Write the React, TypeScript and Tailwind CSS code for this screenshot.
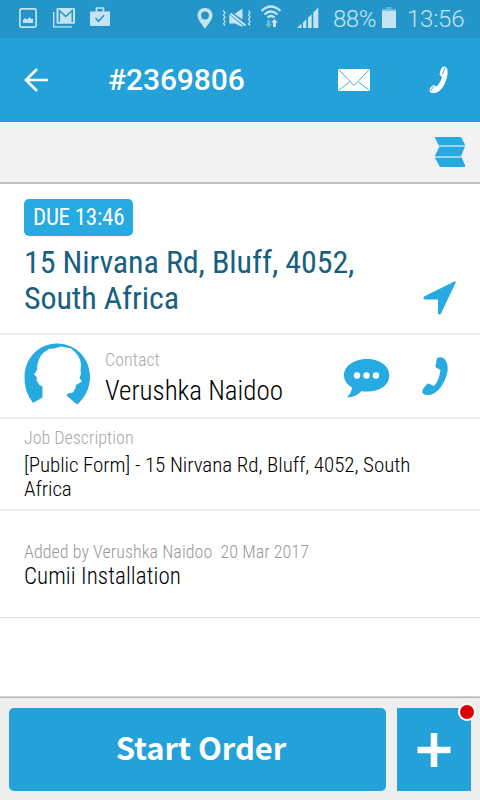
import type { ReactNode } from 'react';

const ROBOTO = "font-['Roboto','Liberation_Sans',sans-serif]";
const CONDENSED = "font-['Roboto','Liberation_Sans',sans-serif] [font-stretch:75%] whitespace-nowrap";

function StatusBar() {
  return (
    <div className="flex h-[38px] shrink-0 items-start bg-[#2495c8] text-[#c5e4f2]">
      <svg className="ml-[19px] mt-[8px] shrink-0" width="18" height="20" viewBox="0 0 18 20">
        <rect x="0.9" y="0.9" width="16.2" height="18.2" rx="1.5" fill="none" stroke="currentColor" strokeWidth="1.7" />
        <path d="M4 15v-3l2.200-2 2 1.800 2.200-2.800 1.600 2 1.500-.5.500 1V15z" fill="currentColor" />
      </svg>
      <svg className="ml-[16px] mt-[8px] shrink-0" width="22" height="20" viewBox="0 0 22 20">
        <path d="M0.7 4v14.900H19" fill="none" stroke="currentColor" strokeWidth="1.4" />
        <rect x="3.500" y="0" width="18.500" height="15.800" rx="1" fill="currentColor" />
        <path d="M6.300 14V2.500L12.800 8.500 19.300 2.500V14" fill="none" stroke="#2495c8" strokeWidth="1.500" />
      </svg>
      <svg className="ml-[15px] mt-[7px] shrink-0" width="20" height="20" viewBox="0 0 20 20">
        <path d="M6.500 5V1.500Q6.500 1 7 1h6q.5 0 .5.500V5" fill="none" stroke="currentColor" strokeWidth="1.700" />
        <path d="M0 4.500h20V17.500q0 1.500-1.500 1.500h-17Q0 19 0 17.500z" fill="currentColor" />
        <path d="M5.500 11l3 3.200 5.500-6" fill="none" stroke="#2495c8" strokeWidth="1.600" />
      </svg>
      <svg className="ml-[87px] mt-[8px] shrink-0" width="16" height="21" viewBox="0 0 16 21">
        <path fillRule="evenodd" d="M8 0C3.500 0 .5 3.300.5 7.300.5 12 5 16 8 20.800 11 16 15.500 12 15.500 7.300 15.500 3.300 12.500 0 8 0zm0 3.600a3.900 3.900 0 1 1 0 7.800 3.900 3.900 0 0 1 0-7.800z" fill="currentColor" />
      </svg>
      <svg className="ml-[9px] mt-[8px] shrink-0" width="29" height="21" viewBox="0 0 29 21">
        <path d="M1 2.500l2 2.200-1.500 2.200 1.500 2.200-1.500 2.200 1.500 2.200-1.500 2.200 1.500 1.800M26.500 2.500l1.500 2.200-1.500 2.200 1.500 2.200-1.500 2.200 1.500 2.200-1.500 2.200 1.500 1.800" fill="none" stroke="currentColor" strokeWidth="1.200" />
        <path d="M12.500 6L20.500.5V11.500z" fill="currentColor" />
        <path d="M7.300 6.500L20.500 17.500v1.500L13 15.500H7.300z" fill="currentColor" />
        <path d="M8.500 5.500L23.500 17.500" stroke="currentColor" strokeWidth="2.200" />
      </svg>
      <svg className="ml-[9px] mt-[5px] shrink-0" width="22" height="23" viewBox="0 0 22 23">
        <path d="M1.500 6Q11-3 20.500 6M4.500 9.500Q11 3.500 17.500 9.500M7.500 12.500Q11 9.500 14.500 12.500" fill="none" stroke="currentColor" strokeWidth="2.300" />
        <path d="M7 15h3v4h2l-3.500 4L5 19h2z" fill="currentColor" opacity="0.45" />
        <path d="M13 22V17.500h-2L14.500 14l3.300 3.500H16V22z" fill="currentColor" />
      </svg>
      <svg className="ml-[15px] mt-[7px] shrink-0" width="22" height="21" viewBox="0 0 22 21">
        <path d="M0 21l4.500-4.200V21zM6 15.400l3.300-3.100V21H6zM11 10.700l3.700-3.500V21H11zM16.300 5.500L21.300.5V21h-5z" fill="currentColor" />
      </svg>
      <div className={`${ROBOTO} ml-[14px] mt-[5px] w-[43px] whitespace-nowrap text-[24px] font-light leading-[28px] tracking-[-0.5px]`}>88%</div>
      <svg className="ml-[6px] mt-[7px] shrink-0" width="14" height="21" viewBox="0 0 14 21">
        <path d="M4.500 0h5v2H14v2H0V2h4.500z" fill="currentColor" opacity="0.45" />
        <path d="M0 3.800h14V21H0z" fill="currentColor" />
      </svg>
      <div className={`${ROBOTO} ml-[11px] mt-[5px] whitespace-nowrap text-[24px] font-light leading-[28px] tracking-[-0.2px]`}>13:56</div>
    </div>
  );
}

function Header() {
  return (
    <header className="flex h-[84px] shrink-0 items-center bg-[#25a1d9] text-white">
      <svg className="ml-[24px] shrink-0" width="24" height="24" viewBox="0 0 24 24">
        <path d="M13 1L2 12l11 11M2 12h22" fill="none" stroke="currentColor" strokeWidth="2.700" />
      </svg>
      <h1 className={`${ROBOTO} ml-[60px] w-[229px] text-[30px] font-medium leading-[36px] tracking-[-0.1px]`}>#2369806</h1>
      <svg className="ml-[1px] shrink-0" width="32" height="22" viewBox="0 0 32 22">
        <rect width="32" height="22" rx="0.500" fill="currentColor" />
        <path d="M0.500 0.500L16 16.500 31.500.500M0.500 21.500L11.500 13M31.500 21.500L20.500 13" fill="none" stroke="#25a1d9" strokeWidth="0.900" />
      </svg>
      <svg className="ml-[59px] shrink-0" width="20" height="28" viewBox="0 0 20 28">
        <path d="M13.500.8Q16-.2 18 2.500 19.500 6 17.500 13 14 24 7.500 26.500 3 28 .5 25.500L1 22 4.500 18.500 7.500 20.500Q11 17.500 13 11L10.500 8.500 11.500 4z" fill="currentColor" />
        <path d="M15.700 2L13.500 8.500M5.200 19L1.800 25" stroke="#25a1d9" strokeWidth="0.800" />
      </svg>
    </header>
  );
}

function MapStrip() {
  return (
    <div className="flex h-[62px] shrink-0 items-start justify-end border-b-2 border-[#bfbfbf] bg-[#f2f2f2] pr-[15px] pt-[15px]">
      <svg width="30" height="30" viewBox="0 0 30 30">
        <path d="M0 0h26l4 7.500V9.500L26 19l4 9v2H5L0 21V18.500L4.500 9.500 0 1z" fill="#27aae1" />
        <path d="M3.500 9H30M0 20H27" stroke="#9bd5ef" strokeWidth="2" />
      </svg>
    </div>
  );
}

function Section({ className, children }: { className: string; children: ReactNode }) {
  return <section className={`shrink-0 px-[24px] ${className}`}>{children}</section>;
}

export default function App() {
  return (
    <div className="flex h-[800px] w-[480px] flex-col overflow-hidden bg-white">
      <StatusBar />
      <Header />
      <MapStrip />

      <Section className="flex h-[151px] justify-between border-b-2 border-[#eeeeee]">
        <div>
          <div className="mt-[15px] h-[37px] w-[109px] rounded-[5px] bg-[#27aae1] pl-[9px] text-white">
            <div className={`${CONDENSED} text-[23px] leading-[37px] tracking-[-0.25px]`}>DUE 13:46</div>
          </div>
          <div className={`${CONDENSED} mt-[8px] text-[32px] leading-[36px] tracking-[-0.11px] text-[#19607f]`}>
            15 Nirvana Rd, Bluff, 4052,
            <br />
            South Africa
          </div>
        </div>
        <svg className="mt-[97px] shrink-0" width="33" height="34" viewBox="0 0 33 34">
          <path d="M31.800.2Q33 0 32.700 1.500L18 32.500Q17 34 15 33V18.500H1.500Q-.5 17 1 15.500z" fill="#27aae1" />
        </svg>
      </Section>

      <Section className="flex h-[84px] border-b-2 border-[#eeeeee]">
        <svg className="mt-[8px] shrink-0" width="66" height="62" viewBox="0 0 66 62">
          <path d="M9 60Q0 49 .5 33.500C1 14 16 0 33.500.5 52 1 66 15 66 34 66 46 60 56 53 61.500L42.500 52.500 44 50.500 49 49.500 51.500 45 52 42 58 38.500 55.500 35 57 31 56.500 27C58 20 56 14 51 9L47 5.500 42 4.500 37 3.500 30 5.500 25 6 19 10 16 14 13.500 21 13 27 10 31.500 13 34.500 12.500 37.500 15.500 42 18.500 43.500V54.500z" fill="#27aae1" />
        </svg>
        <div className="ml-[15px] w-[239px]">
          <div className={`${CONDENSED} mt-[14px] text-[18px] font-light leading-[22px] text-[#aaaaaa]`}>Contact</div>
          <div className={`${CONDENSED} mt-[4px] text-[27px] font-light leading-[32px] text-black`}>Verushka Naidoo</div>
        </div>
        <svg className="mt-[24px] shrink-0" width="46" height="39" viewBox="0 0 46 39">
          <path d="M23 0C36 0 45.300 7 45.300 16.500S36 33 22 32.500Q19 32.500 17.500 32 13 37.500 4 38.500 3 38.500 3.500 37.500 7.500 34 8 28.500 0 24 0 16.500C0 7 10 0 23 0z" fill="#27aae1" />
          <circle cx="13" cy="16.500" r="3.200" fill="white" />
          <circle cx="22.500" cy="16.500" r="3.200" fill="white" />
          <circle cx="32" cy="16.500" r="3.200" fill="white" />
        </svg>
        <svg className="ml-[32px] mt-[22px] shrink-0" width="26" height="38" viewBox="0 0 26 38">
          <path d="M15 1Q20-1 23 2.500 27 8 25 17 21 31 12 36.500 5 39.500 1 36.500-.5 35 1 32L5 27Q6 26 7.500 27L12 29Q17 24 18.500 13L14 10.500Q13.500 10 13.500 9z" fill="#27aae1" />
        </svg>
      </Section>

      <Section className="h-[92px] border-b-2 border-[#eeeeee]">
        <div className={`${CONDENSED} mt-[8px] text-[18px] font-light leading-[22px] text-[#aaaaaa]`}>Job Description</div>
        <div className={`${CONDENSED} mt-[4px] text-[21px] font-[330] leading-[24px] tracking-[-0.06px] text-black`}>
          [Public Form] - 15 Nirvana Rd, Bluff, 4052, South
          <br />
          Africa
        </div>
      </Section>

      <Section className="h-[107px] border-b border-[#dcdcdc]">
        <div className={`${CONDENSED} mt-[30px] whitespace-pre text-[18px] font-[330] leading-[22px] tracking-[0.04px] text-[#999999]`}>{'Added by Verushka Naidoo  20 Mar 2017'}</div>
        <div className={`${CONDENSED} text-[23px] font-[330] leading-[28px] tracking-[0.08px] text-black`}>Cumii Installation</div>
      </Section>

      <div className="flex-1" />

      <footer className="flex h-[104px] shrink-0 items-start gap-[11px] border-t border-[#d5d5d5] bg-[#eeeeee] pl-[9px] shadow-[inset_0_1px_0_#b5b5b5]">
        <button className="mt-[11px] h-[83px] w-[377px] rounded-[5px] bg-[#25a1d9] pb-[6px] pl-[7px] text-center font-['Noto_Sans_CJK_JP','Noto_Sans',sans-serif] text-[31px] font-semibold leading-[77px] tracking-[-0.05px] text-white">
          Start Order
        </button>
        <button className="relative mt-[11px] flex h-[83px] w-[74px] items-center justify-center bg-[#25a1d9]">
          <svg width="34" height="34" viewBox="0 0 34 34">
            <path d="M17 0v34M0.500 17h33" stroke="white" strokeWidth="6.500" />
          </svg>
          <span className="absolute -right-[5px] -top-[5px] h-[18px] w-[18px] rounded-full border-2 border-white bg-[#dd0000]" />
        </button>
      </footer>
    </div>
  );
}
